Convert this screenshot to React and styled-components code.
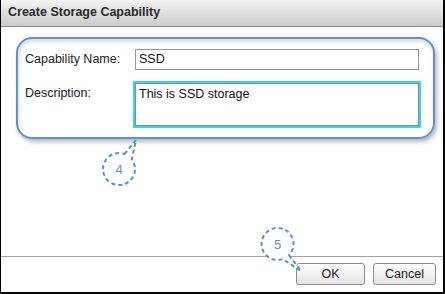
import React from "react";
import styled, { createGlobalStyle } from "styled-components";

const GlobalStyle = createGlobalStyle`
  html, body {
    margin: 0;
    padding: 0;
    background: #ffffff;
  }
  body {
    font-family: "Liberation Sans", Arial, sans-serif;
  }
`;

const Dialog = styled.div`
  position: relative;
  box-sizing: border-box;
  width: 445px;
  height: 294px;
  display: flex;
  flex-direction: column;
  background: #ffffff;
  border-left: 1px solid #000;
  border-right: 2px solid #000;
  border-bottom: 2px solid #000;
`;

const TitleBar = styled.div`
  height: 26px;
  border-bottom: 1px solid #8a8a8a;
  background: linear-gradient(#f3f3f3, #cbcbcb);
  padding-left: 7px;
  font-size: 12.5px;
  font-weight: bold;
  line-height: 24px;
  color: #2a2a2a;
`;

const Body = styled.div`
  flex: 1;
  padding: 10px 8px 0 15px;
`;

const CalloutFrame = styled.div`
  box-sizing: border-box;
  width: 419px;
  height: 102px;
  border: 2px solid #5c8fd8;
  border-radius: 16px;
  box-shadow: 2px 3px 4px rgba(0, 0, 0, 0.28), inset 1px 3px 4px rgba(0, 0, 0, 0.14);
  padding: 10px 14px 0 7px;
  display: grid;
  grid-template-columns: 110px 284px;
  row-gap: 11px;
  align-items: start;
  align-content: start;
`;

const Label = styled.label`
  font-size: 12.5px;
  color: #222;
  line-height: ${(p) => p.$line}px;
  margin-top: ${(p) => p.$top || 0}px;
`;

const TextInput = styled.div`
  box-sizing: border-box;
  height: 21px;
  border: 1px solid #959595;
  padding: 0 3px;
  font-size: 12.5px;
  line-height: 19px;
  color: #111;
`;

const TextArea = styled.div`
  box-sizing: border-box;
  height: 43px;
  margin-top: 2px;
  border: 1px solid #8a8a8a;
  outline: 2px solid #27dcef;
  padding: 3px 3px;
  font-size: 12.5px;
  line-height: 14px;
  color: #111;
`;

const Footer = styled.div`
  height: 29px;
  border-top: 1px solid #a3a3a3;
  display: flex;
  justify-content: flex-end;
  align-items: flex-start;
  gap: 8px;
  padding: 6px 7px 0 0;
`;

const Button = styled.button`
  box-sizing: border-box;
  width: ${(p) => p.$w}px;
  height: 22px;
  border: 1px solid #8c8c8c;
  border-radius: 3px;
  background: linear-gradient(#fefefe, #e4e4e4);
  font-family: "Liberation Sans", Arial, sans-serif;
  font-size: 12.5px;
  color: #222;
  padding: 0;
`;

const Marker = styled.svg`
  position: absolute;
  left: ${(p) => p.$x}px;
  top: ${(p) => p.$y}px;
  overflow: visible;
`;

function Callout({ x, y, w, h, path, cx, cy, label }) {
  return (
    <Marker $x={x} $y={y} width={w} height={h}>
      <path
        d={path}
        fill="#ffffff"
        stroke="#5b8fd6"
        strokeWidth="2"
        strokeDasharray="4 3"
        strokeLinejoin="round"
      />
      <text
        x={cx}
        y={cy + 4.5}
        textAnchor="middle"
        fontSize="13"
        fill="#5b8fd6"
        fontFamily="Liberation Sans, Arial, sans-serif"
      >
        {label}
      </text>
    </Marker>
  );
}

export default function App() {
  return (
    <>
      <GlobalStyle />
      <Dialog>
        <TitleBar>Create Storage Capability</TitleBar>
        <Body>
          <CalloutFrame>
            <Label $line={21}>Capability Name:</Label>
            <TextInput>SSD</TextInput>
            <Label $line={14} $top={5}>Description:</Label>
            <TextArea>This is SSD storage</TextArea>
          </CalloutFrame>
        </Body>
        <Footer>
          <Button $w={69}>OK</Button>
          <Button $w={63}>Cancel</Button>
        </Footer>
        <Callout
          x={98}
          y={136}
          w={42}
          h={54}
          cx={20}
          cy={33}
          label="4"
          path="M25.5 18 L37 4 L32.8 23.4 A16 16 0 1 1 25.5 18 Z"
        />
        <Callout
          x={258}
          y={226}
          w={46}
          h={50}
          cx={18.5}
          cy={18}
          label="5"
          path="M30 29.1 L42 45 L23.7 33.1 A16 16 0 1 1 30 29.1 Z"
        />
      </Dialog>
    </>
  );
}
